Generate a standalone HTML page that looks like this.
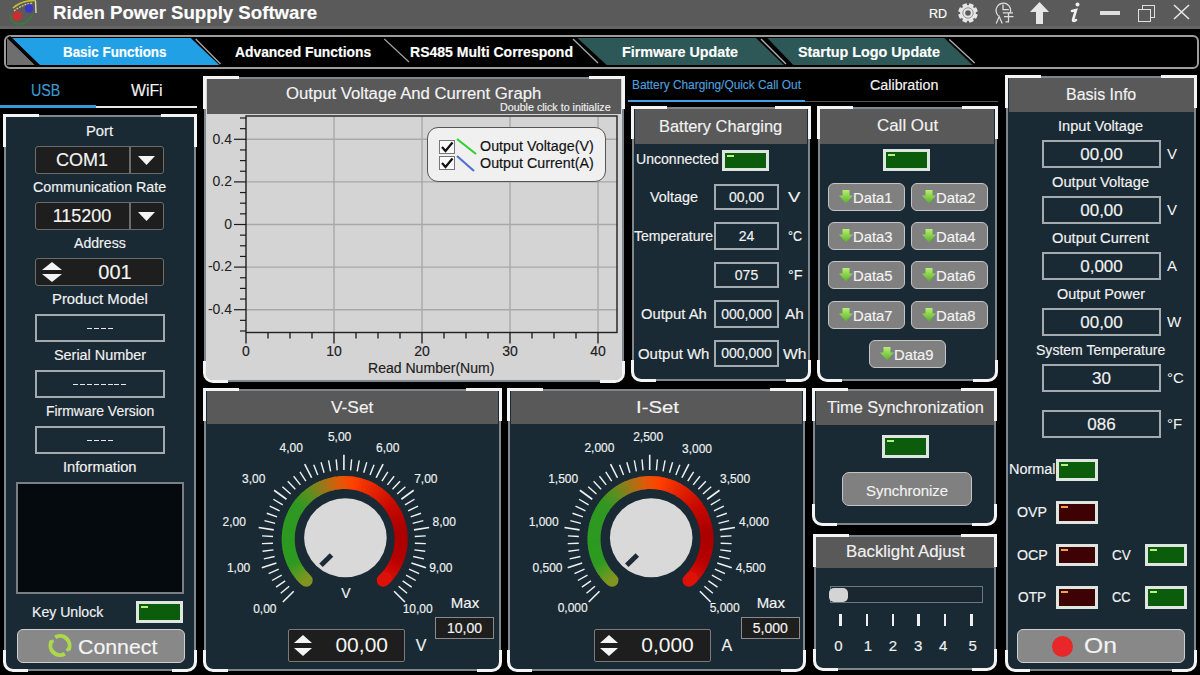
<!DOCTYPE html><html><head><meta charset="utf-8"><style>
html,body{margin:0;padding:0;}
body{width:1200px;height:675px;overflow:hidden;background:#000;position:relative;font-family:"Liberation Sans", sans-serif;}
.a{position:absolute;}
.t{position:absolute;white-space:nowrap;line-height:1;transform-origin:0 50%;-webkit-text-stroke:0.15px currentColor;}
.c{-webkit-text-stroke:0.15px currentColor;}
.c{text-align:center;white-space:nowrap;}
</style></head><body>
<div class="a" style="left:0px;top:0px;width:1200px;height:29px;background:#5a5a5a;"></div>
<div class="a" style="left:0px;top:26px;width:1200px;height:2.5px;background:#646464;"></div>
<span class="t" style="left:53.07px;top:3.19px;font-size:19px;color:#ffffff;font-weight:700;transform:scaleX(0.9809);">Riden Power Supply Software</span>
<svg class="a" style="left:6px;top:0px" width="36" height="28" viewBox="0 0 36 28">
<path d="M7 8 Q16 0 30 0.5" stroke="#c8c03a" stroke-width="1.6" fill="none"/>
<path d="M8 11 Q17 4 27 3" stroke="#d8d070" stroke-width="1.2" fill="none" stroke-dasharray="2 1"/>
<path d="M29.5 1 L30 13" stroke="#d8d8b0" stroke-width="1.4"/>
<circle cx="23" cy="8.5" r="4.2" fill="#3838c8"/>
<circle cx="11" cy="16" r="4.8" fill="#c83030"/>
<path d="M4 14 Q5 24 13 24.5 Q22 24 27 14" stroke="#3a7a40" stroke-width="1.8" fill="none"/>
<path d="M9 22 V25 M13 22 V25.5 M17 22 V25" stroke="#3a7a40" stroke-width="1.2"/>
</svg>
<span class="t" style="left:929.38px;top:7.13px;font-size:13px;color:#ffffff;font-weight:400;transform:scaleX(0.9605);">RD</span>
<svg class="a" style="left:958px;top:3px" width="20" height="20" viewBox="-10 -10 20 20"><rect x="-2.4" y="-9.8" width="4.8" height="5" rx="1" transform="rotate(22.5)" fill="#e6e6e6"/><rect x="-2.4" y="-9.8" width="4.8" height="5" rx="1" transform="rotate(67.5)" fill="#e6e6e6"/><rect x="-2.4" y="-9.8" width="4.8" height="5" rx="1" transform="rotate(112.5)" fill="#e6e6e6"/><rect x="-2.4" y="-9.8" width="4.8" height="5" rx="1" transform="rotate(157.5)" fill="#e6e6e6"/><rect x="-2.4" y="-9.8" width="4.8" height="5" rx="1" transform="rotate(202.5)" fill="#e6e6e6"/><rect x="-2.4" y="-9.8" width="4.8" height="5" rx="1" transform="rotate(247.5)" fill="#e6e6e6"/><rect x="-2.4" y="-9.8" width="4.8" height="5" rx="1" transform="rotate(292.5)" fill="#e6e6e6"/><rect x="-2.4" y="-9.8" width="4.8" height="5" rx="1" transform="rotate(337.5)" fill="#e6e6e6"/>
<circle r="7.8" fill="#e6e6e6"/><circle r="5.2" fill="none" stroke="#8a8a8a" stroke-width="0.9"/><circle r="2.8" fill="#5a5a5a"/></svg>
<svg class="a" style="left:994px;top:0px" width="22" height="26" viewBox="0 0 22 26" fill="none" stroke="#dedede" stroke-width="1.25">
<path d="M16 13.5 A7.3 7.3 0 1 0 4.6 16"/>
<path d="M9 4.5 V9.5 H14.8"/><path d="M8.8 12.8 H19 M10 16.5 H19.5 M14.5 12.8 V21.8 H11.5"/>
<path d="M2.2 23.5 L5.2 16.5 L8.2 23.5"/>
</svg>
<svg class="a" style="left:1030px;top:2px" width="19" height="22" viewBox="0 0 19 22"><path d="M9.5 0 L19 10 H13 V22 H6 V10 H0 Z" fill="#e6e6e6"/></svg>
<svg class="a" style="left:1068px;top:2px" width="13" height="22" viewBox="0 0 13 22"><circle cx="9.5" cy="2.5" r="2" fill="#f0f0f0"/>
<path d="M4 9 L8 8 L5 18 Q5 20 8 18" stroke="#f0f0f0" stroke-width="2.6" fill="none" stroke-linecap="round"/></svg>
<div class="a" style="left:1100px;top:11px;width:20px;height:4px;background:#e0e0e0;"></div>
<div class="a" style="left:1142px;top:5px;width:13px;height:13px;border:1.5px solid #e0e0e0;box-sizing:border-box;"></div>
<div class="a" style="left:1138px;top:9px;width:13px;height:13px;border:1.5px solid #e0e0e0;box-sizing:border-box;background:#5a5a5a;"></div>
<svg class="a" style="left:1173px;top:4px" width="17" height="16" viewBox="0 0 17 16"><path d="M1 1 L16 15 M16 1 L1 15" stroke="#e6e6e6" stroke-width="1.6"/></svg>
<div class="a" style="left:4px;top:34.7px;width:1194.5px;height:34px;border:2.5px solid #9c9e9e;border-radius:6px;box-sizing:border-box;background:#000;"></div>
<svg class="a" style="left:0;top:0" width="1200" height="70">
<path d="M7 38 L35 65 L7 65 Z" fill="#6e6e6e"/>
<path d="M12 38 L190.7 38 L219.3 65 L40 65 Z" fill="#22a0e6"/>
<path d="M9 37 L37 65" stroke="#000" stroke-width="3"/>
<path d="M195.7 39 L220.5 64" stroke="#a8a8a8" stroke-width="1.3"/>
<path d="M384.3 39 L409 62" stroke="#a0a0a0" stroke-width="1.2"/>
<path d="M573 39 L598 63" stroke="#a8a8a8" stroke-width="1.3"/>
<path d="M577.3 38 L756 38 L784 65 L606.7 65 Z" fill="#2e5757"/>
<path d="M761 39 L786 64" stroke="#b0b0b0" stroke-width="1.3"/>
<path d="M767.3 38 L944.3 38 L972.7 65 L793.3 65 Z" fill="#2e5757"/>
<path d="M949.3 39.5 L974.7 63" stroke="#b0b0b0" stroke-width="1.3"/>
</svg>
<span class="t" style="left:63.33px;top:45.14px;font-size:14px;color:#ffffff;font-weight:700;transform:scaleX(0.9568);">Basic Functions</span>
<span class="t" style="left:235.31px;top:45.14px;font-size:14px;color:#ffffff;font-weight:700;transform:scaleX(0.9883);">Advanced Functions</span>
<span class="t" style="left:410.30px;top:45.14px;font-size:14px;color:#ffffff;font-weight:700;transform:scaleX(1.0025);">RS485 Multi Correspond</span>
<span class="t" style="left:622.29px;top:45.14px;font-size:14px;color:#ffffff;font-weight:700;transform:scaleX(1.0213);">Firmware Update</span>
<span class="t" style="left:798.28px;top:45.14px;font-size:14px;color:#ffffff;font-weight:700;transform:scaleX(1.0249);">Startup Logo Update</span>
<span class="t" style="left:31.29px;top:82.66px;font-size:16px;color:#3d9ad4;font-weight:400;transform:scaleX(0.8917);">USB</span>
<span class="t" style="left:131.21px;top:82.66px;font-size:16px;color:#f4f4f4;font-weight:400;transform:scaleX(0.9868);">WiFi</span>
<div class="a" style="left:0px;top:104.5px;width:96px;height:3px;background:#3a9ad8;"></div>
<div class="a" style="left:96px;top:105.6px;width:101px;height:2px;background:#e8e8e8;"></div>
<div class="a" style="left:4px;top:115px;width:192px;height:556px;background:#1a2a34;border:2.6px solid #80878c;box-sizing:border-box;border-radius:0 0 9px 9px;"></div>
<div class="a" style="left:3px;top:114px;width:36px;height:33px;border-top:3.6px solid #f4f4f4;border-left:3.6px solid #f4f4f4;box-sizing:border-box;"></div>
<div class="a" style="left:161px;top:114px;width:36px;height:33px;border-top:3.6px solid #f4f4f4;border-right:3.6px solid #f4f4f4;box-sizing:border-box;"></div>
<div class="a" style="left:3px;top:650px;width:25px;height:22px;border-bottom:3.6px solid #f4f4f4;border-left:3.6px solid #f4f4f4;box-sizing:border-box;border-bottom-left-radius:10px;"></div>
<div class="a" style="left:172px;top:650px;width:25px;height:22px;border-bottom:3.6px solid #f4f4f4;border-right:3.6px solid #f4f4f4;box-sizing:border-box;border-bottom-right-radius:10px;"></div>
<span class="t" style="left:86.26px;top:124.14px;font-size:14px;color:#f2f2f2;font-weight:400;transform:scaleX(1.0569);">Port</span>
<div class="a" style="left:35px;top:146px;width:129px;height:28px;background:#1e1e1e;border:1.5px solid #6c6c6c;border-radius:3px;box-sizing:border-box;"></div>
<div class="a" style="left:129px;top:147px;width:1.5px;height:26px;background:#6c6c6c;"></div>
<div class="a c" style="left:35px;top:146px;width:94px;height:28px;line-height:28px;font-size:18px;color:#f4f4f4">COM1</div>
<svg class="a" style="left:138px;top:156px" width="17" height="9"><path d="M0 0 H17 L8.5 9 Z" fill="#f4f4f4"/></svg>
<span class="t" style="left:33.29px;top:180.14px;font-size:14px;color:#f2f2f2;font-weight:400;transform:scaleX(1.0185);">Communication Rate</span>
<div class="a" style="left:35px;top:202px;width:129px;height:28px;background:#1e1e1e;border:1.5px solid #6c6c6c;border-radius:3px;box-sizing:border-box;"></div>
<div class="a" style="left:129px;top:203px;width:1.5px;height:26px;background:#6c6c6c;"></div>
<div class="a c" style="left:35px;top:202px;width:94px;height:28px;line-height:28px;font-size:18px;color:#f4f4f4">115200</div>
<svg class="a" style="left:138px;top:212px" width="17" height="9"><path d="M0 0 H17 L8.5 9 Z" fill="#f4f4f4"/></svg>
<span class="t" style="left:74.29px;top:236.14px;font-size:14px;color:#f2f2f2;font-weight:400;transform:scaleX(1.0081);">Address</span>
<div class="a" style="left:35px;top:258px;width:129px;height:28px;background:#1e1e1e;border:1.5px solid #6c6c6c;border-radius:3px;box-sizing:border-box;"></div>
<svg class="a" style="left:42px;top:262px" width="20" height="20"><path d="M10 0 L20 8 H0 Z M0 12 H20 L10 20 Z" fill="#f4f4f4"/></svg>
<div class="a c" style="left:75px;top:258px;width:80px;height:28px;line-height:28px;font-size:20px;color:#f4f4f4">001</div>
<span class="t" style="left:52.26px;top:292.14px;font-size:14px;color:#f2f2f2;font-weight:400;transform:scaleX(1.0609);">Product Model</span>
<div class="a" style="left:35px;top:314px;width:130px;height:28px;border:2px solid #a3abb0;box-sizing:border-box;background:#1a2a34;"></div>
<div class="a c" style="left:35px;top:314px;width:130px;height:28px;font-size:15px;line-height:28px;color:#f2f2f2"></div>
<div class="a" style="left:87.15px;top:327.5px;width:25.7px;height:1.6px;background:repeating-linear-gradient(90deg,#e8e8e8 0 5px,transparent 5px 6.9px);"></div>
<span class="t" style="left:54.28px;top:348.14px;font-size:14px;color:#f2f2f2;font-weight:400;transform:scaleX(1.0274);">Serial Number</span>
<div class="a" style="left:35px;top:370px;width:130px;height:28px;border:2px solid #a3abb0;box-sizing:border-box;background:#1a2a34;"></div>
<div class="a c" style="left:35px;top:370px;width:130px;height:28px;font-size:15px;line-height:28px;color:#f2f2f2"></div>
<div class="a" style="left:73.35px;top:383.5px;width:53.3px;height:1.6px;background:repeating-linear-gradient(90deg,#e8e8e8 0 5px,transparent 5px 6.9px);"></div>
<span class="t" style="left:46.30px;top:404.14px;font-size:14px;color:#f2f2f2;font-weight:400;transform:scaleX(0.9944);">Firmware Version</span>
<div class="a" style="left:35px;top:426px;width:130px;height:28px;border:2px solid #a3abb0;box-sizing:border-box;background:#1a2a34;"></div>
<div class="a c" style="left:35px;top:426px;width:130px;height:28px;font-size:15px;line-height:28px;color:#f2f2f2"></div>
<div class="a" style="left:87.15px;top:439.5px;width:25.7px;height:1.6px;background:repeating-linear-gradient(90deg,#e8e8e8 0 5px,transparent 5px 6.9px);"></div>
<span class="t" style="left:63.27px;top:460.14px;font-size:14px;color:#f2f2f2;font-weight:400;transform:scaleX(1.0496);">Information</span>
<div class="a" style="left:16px;top:482px;width:168px;height:112px;background:#050a0e;border:2px solid #7a7f83;box-sizing:border-box;"></div>
<span class="t" style="left:32.30px;top:605.14px;font-size:14px;color:#f2f2f2;font-weight:400;transform:scaleX(1.0057);">Key Unlock</span>
<div class="a" style="left:136px;top:601px;width:47px;height:22px;border:3px solid #dfe6df;box-sizing:border-box;background:#0b5c0b;"></div>
<div class="a" style="left:141px;top:606px;width:7px;height:2px;background:#b8f080;"></div>
<div class="a" style="left:17px;top:629px;width:168px;height:34px;background:#888888;border:1.5px solid #cfcfcf;border-radius:6px;box-sizing:border-box;"></div>
<svg class="a" style="left:46px;top:632px" width="28" height="28" viewBox="0 0 28 28" fill="none" stroke="#acd84c" stroke-width="4">
<path d="M9.2 5.19 A9.6 9.6 0 0 1 22.31 18.3"/><path d="M18.8 21.81 A9.6 9.6 0 0 1 5.69 8.7"/>
<path d="M20.5 18.5 L24 16" stroke-width="3"/><path d="M7.5 8.5 L4 11" stroke-width="3"/>
</svg>
<span class="t" style="left:77.93px;top:635.71px;font-size:21px;color:#f4f4f4;font-weight:400;transform:scaleX(1.0145);">Connect</span>
<div class="a" style="left:204px;top:76.5px;width:419.70000000000005px;height:305.0px;background:#d4d4d4;border:2.6px solid #80878c;box-sizing:border-box;border-radius:0 0 9px 9px;"></div>
<div class="a" style="left:206.6px;top:78.5px;width:414.50000000000006px;height:35.3px;background:#595959;"></div>
<div class="a" style="left:203px;top:75.5px;width:36px;height:33px;border-top:3.6px solid #f4f4f4;border-left:3.6px solid #f4f4f4;box-sizing:border-box;"></div>
<div class="a" style="left:588.7px;top:75.5px;width:36px;height:33px;border-top:3.6px solid #f4f4f4;border-right:3.6px solid #f4f4f4;box-sizing:border-box;"></div>
<div class="a" style="left:203px;top:360.5px;width:25px;height:22px;border-bottom:3.6px solid #f4f4f4;border-left:3.6px solid #f4f4f4;box-sizing:border-box;border-bottom-left-radius:10px;"></div>
<div class="a" style="left:599.7px;top:360.5px;width:25px;height:22px;border-bottom:3.6px solid #f4f4f4;border-right:3.6px solid #f4f4f4;box-sizing:border-box;border-bottom-right-radius:10px;"></div>
<span class="t" style="left:286.17px;top:86.16px;font-size:16px;color:#f4f4f4;font-weight:400;transform:scaleX(1.0435);">Output Voltage And Current Graph</span>
<span class="t" style="left:500.47px;top:102.36px;font-size:10.5px;color:#f0f0f0;font-weight:400;transform:scaleX(1.0190);">Double click to initialize</span>
<svg class="a" style="left:0;top:0" width="1200" height="400"><line x1="246" y1="309.7" x2="617" y2="309.7" stroke="#a8a8a8" stroke-width="1.4"/><line x1="246" y1="267.1" x2="617" y2="267.1" stroke="#a8a8a8" stroke-width="1.4"/><line x1="246" y1="224.5" x2="617" y2="224.5" stroke="#a8a8a8" stroke-width="1.4"/><line x1="246" y1="181.9" x2="617" y2="181.9" stroke="#a8a8a8" stroke-width="1.4"/><line x1="246" y1="139.3" x2="617" y2="139.3" stroke="#a8a8a8" stroke-width="1.4"/><line x1="334.0" y1="116" x2="334.0" y2="332.5" stroke="#a8a8a8" stroke-width="1.4"/><line x1="422.0" y1="116" x2="422.0" y2="332.5" stroke="#a8a8a8" stroke-width="1.4"/><line x1="510.0" y1="116" x2="510.0" y2="332.5" stroke="#a8a8a8" stroke-width="1.4"/><line x1="598.0" y1="116" x2="598.0" y2="332.5" stroke="#a8a8a8" stroke-width="1.4"/><rect x="246" y="116" width="371" height="216.5" fill="none" stroke="#202020" stroke-width="1.4"/><line x1="240" y1="331.0" x2="246" y2="331.0" stroke="#1a1a1a" stroke-width="1.2"/><line x1="240" y1="320.35" x2="246" y2="320.35" stroke="#1a1a1a" stroke-width="1.2"/><line x1="234" y1="309.7" x2="246" y2="309.7" stroke="#1a1a1a" stroke-width="1.2"/><line x1="240" y1="299.05" x2="246" y2="299.05" stroke="#1a1a1a" stroke-width="1.2"/><line x1="240" y1="288.4" x2="246" y2="288.4" stroke="#1a1a1a" stroke-width="1.2"/><line x1="240" y1="277.75" x2="246" y2="277.75" stroke="#1a1a1a" stroke-width="1.2"/><line x1="234" y1="267.1" x2="246" y2="267.1" stroke="#1a1a1a" stroke-width="1.2"/><line x1="240" y1="256.45" x2="246" y2="256.45" stroke="#1a1a1a" stroke-width="1.2"/><line x1="240" y1="245.8" x2="246" y2="245.8" stroke="#1a1a1a" stroke-width="1.2"/><line x1="240" y1="235.15" x2="246" y2="235.15" stroke="#1a1a1a" stroke-width="1.2"/><line x1="234" y1="224.5" x2="246" y2="224.5" stroke="#1a1a1a" stroke-width="1.2"/><line x1="240" y1="213.85" x2="246" y2="213.85" stroke="#1a1a1a" stroke-width="1.2"/><line x1="240" y1="203.2" x2="246" y2="203.2" stroke="#1a1a1a" stroke-width="1.2"/><line x1="240" y1="192.55" x2="246" y2="192.55" stroke="#1a1a1a" stroke-width="1.2"/><line x1="234" y1="181.9" x2="246" y2="181.9" stroke="#1a1a1a" stroke-width="1.2"/><line x1="240" y1="171.25" x2="246" y2="171.25" stroke="#1a1a1a" stroke-width="1.2"/><line x1="240" y1="160.6" x2="246" y2="160.6" stroke="#1a1a1a" stroke-width="1.2"/><line x1="240" y1="149.95" x2="246" y2="149.95" stroke="#1a1a1a" stroke-width="1.2"/><line x1="234" y1="139.3" x2="246" y2="139.3" stroke="#1a1a1a" stroke-width="1.2"/><line x1="240" y1="128.64999999999998" x2="246" y2="128.64999999999998" stroke="#1a1a1a" stroke-width="1.2"/><line x1="240" y1="118.0" x2="246" y2="118.0" stroke="#1a1a1a" stroke-width="1.2"/><line x1="246.0" y1="332.5" x2="246.0" y2="343.5" stroke="#1a1a1a" stroke-width="1.3"/><line x1="268.0" y1="332.5" x2="268.0" y2="338.5" stroke="#1a1a1a" stroke-width="1.3"/><line x1="290.0" y1="332.5" x2="290.0" y2="338.5" stroke="#1a1a1a" stroke-width="1.3"/><line x1="312.0" y1="332.5" x2="312.0" y2="338.5" stroke="#1a1a1a" stroke-width="1.3"/><line x1="334.0" y1="332.5" x2="334.0" y2="343.5" stroke="#1a1a1a" stroke-width="1.3"/><line x1="356.0" y1="332.5" x2="356.0" y2="338.5" stroke="#1a1a1a" stroke-width="1.3"/><line x1="378.0" y1="332.5" x2="378.0" y2="338.5" stroke="#1a1a1a" stroke-width="1.3"/><line x1="400.0" y1="332.5" x2="400.0" y2="338.5" stroke="#1a1a1a" stroke-width="1.3"/><line x1="422.0" y1="332.5" x2="422.0" y2="343.5" stroke="#1a1a1a" stroke-width="1.3"/><line x1="444.0" y1="332.5" x2="444.0" y2="338.5" stroke="#1a1a1a" stroke-width="1.3"/><line x1="466.0" y1="332.5" x2="466.0" y2="338.5" stroke="#1a1a1a" stroke-width="1.3"/><line x1="488.0" y1="332.5" x2="488.0" y2="338.5" stroke="#1a1a1a" stroke-width="1.3"/><line x1="510.0" y1="332.5" x2="510.0" y2="343.5" stroke="#1a1a1a" stroke-width="1.3"/><line x1="532.0" y1="332.5" x2="532.0" y2="338.5" stroke="#1a1a1a" stroke-width="1.3"/><line x1="554.0" y1="332.5" x2="554.0" y2="338.5" stroke="#1a1a1a" stroke-width="1.3"/><line x1="576.0" y1="332.5" x2="576.0" y2="338.5" stroke="#1a1a1a" stroke-width="1.3"/><line x1="598.0" y1="332.5" x2="598.0" y2="343.5" stroke="#1a1a1a" stroke-width="1.3"/></svg>
<div class="a" style="left:180px;width:52px;text-align:right;top:131.6px;font-size:14px;line-height:15px;color:#202020">0.4</div>
<div class="a" style="left:180px;width:52px;text-align:right;top:174.2px;font-size:14px;line-height:15px;color:#202020">0.2</div>
<div class="a" style="left:180px;width:52px;text-align:right;top:216.8px;font-size:14px;line-height:15px;color:#202020">0</div>
<div class="a" style="left:180px;width:52px;text-align:right;top:259.4px;font-size:14px;line-height:15px;color:#202020">-0.2</div>
<div class="a" style="left:180px;width:52px;text-align:right;top:302.0px;font-size:14px;line-height:15px;color:#202020">-0.4</div>
<div class="a c" style="left:226.0px;width:40px;top:343.5px;font-size:14px;line-height:15px;color:#202020">0</div>
<div class="a c" style="left:314.0px;width:40px;top:343.5px;font-size:14px;line-height:15px;color:#202020">10</div>
<div class="a c" style="left:402.0px;width:40px;top:343.5px;font-size:14px;line-height:15px;color:#202020">20</div>
<div class="a c" style="left:490.0px;width:40px;top:343.5px;font-size:14px;line-height:15px;color:#202020">30</div>
<div class="a c" style="left:578.0px;width:40px;top:343.5px;font-size:14px;line-height:15px;color:#202020">40</div>
<span class="t" style="left:368.30px;top:361.14px;font-size:14px;color:#202020;font-weight:400;transform:scaleX(1.0032);">Read Number(Num)</span>
<div class="a" style="left:427px;top:127px;width:179px;height:55px;background:#f0f0f0;border:1px solid #555;border-radius:11px;box-sizing:border-box;"></div>
<div class="a" style="left:439px;top:140px;width:16px;height:14px;background:#fafafa;border:1px solid #777;box-sizing:border-box;"></div>
<svg class="a" style="left:440px;top:141px" width="14" height="12"><path d="M2 6 L5.5 10 L12.5 1.5" stroke="#111" stroke-width="2.2" fill="none"/></svg>
<div class="a" style="left:439px;top:156px;width:16px;height:14px;background:#fafafa;border:1px solid #777;box-sizing:border-box;"></div>
<svg class="a" style="left:440px;top:157px" width="14" height="12"><path d="M2 6 L5.5 10 L12.5 1.5" stroke="#111" stroke-width="2.2" fill="none"/></svg>
<svg class="a" style="left:455px;top:137px" width="24" height="36"><line x1="2" y1="2" x2="21" y2="17" stroke="#30d030" stroke-width="2.2"/><line x1="2" y1="19" x2="19" y2="34" stroke="#5070d0" stroke-width="2.2"/></svg>
<span class="t" style="left:480.28px;top:138.64px;font-size:14px;color:#111;font-weight:400;transform:scaleX(1.0219);">Output Voltage(V)</span>
<span class="t" style="left:480.28px;top:155.64px;font-size:14px;color:#111;font-weight:400;transform:scaleX(1.0219);">Output Current(A)</span>
<span class="t" style="left:632.41px;top:78.82px;font-size:12px;color:#4f9fdc;font-weight:400;transform:scaleX(0.9894);">Battery Charging/Quick Call Out</span>
<span class="t" style="left:870.29px;top:77.84px;font-size:14px;color:#f4f4f4;font-weight:400;transform:scaleX(1.0213);">Calibration</span>
<div class="a" style="left:628px;top:100px;width:177px;height:2px;background:#44a2e6;"></div>
<div class="a" style="left:805px;top:100.5px;width:193px;height:1.5px;background:#555555;"></div>
<div class="a" style="left:632px;top:107.3px;width:178px;height:273.7px;background:#1a2a34;border:2.6px solid #80878c;box-sizing:border-box;border-radius:0 0 9px 9px;"></div>
<div class="a" style="left:634.6px;top:109.3px;width:172.8px;height:34.500000000000014px;background:#595959;"></div>
<div class="a" style="left:631px;top:106.3px;width:36px;height:33px;border-top:3.6px solid #f4f4f4;border-left:3.6px solid #f4f4f4;box-sizing:border-box;"></div>
<div class="a" style="left:775px;top:106.3px;width:36px;height:33px;border-top:3.6px solid #f4f4f4;border-right:3.6px solid #f4f4f4;box-sizing:border-box;"></div>
<div class="a" style="left:631px;top:360px;width:25px;height:22px;border-bottom:3.6px solid #f4f4f4;border-left:3.6px solid #f4f4f4;box-sizing:border-box;border-bottom-left-radius:10px;"></div>
<div class="a" style="left:786px;top:360px;width:25px;height:22px;border-bottom:3.6px solid #f4f4f4;border-right:3.6px solid #f4f4f4;box-sizing:border-box;border-bottom-right-radius:10px;"></div>
<span class="t" style="left:659.18px;top:117.97px;font-size:17px;color:#f2f2f2;font-weight:400;transform:scaleX(0.9660);">Battery Charging</span>
<span class="t" style="left:636.30px;top:152.14px;font-size:14px;color:#f2f2f2;font-weight:400;transform:scaleX(1.0049);">Unconnected</span>
<div class="a" style="left:722px;top:150px;width:47px;height:21px;border:3px solid #dfe6df;box-sizing:border-box;background:#0b5c0b;"></div>
<div class="a" style="left:727px;top:155px;width:7px;height:2px;background:#b8f080;"></div>
<span class="t" style="left:650.28px;top:190.14px;font-size:14px;color:#f2f2f2;font-weight:400;transform:scaleX(1.0307);">Voltage</span>
<div class="a" style="left:714px;top:184px;width:65px;height:26px;border:2px solid #a3abb0;box-sizing:border-box;background:#1a2a34;"></div>
<div class="a c" style="left:714px;top:184px;width:65px;height:26px;font-size:14px;line-height:26px;color:#f2f2f2">00,00</div>
<span class="t" style="left:788.08px;top:190.14px;font-size:14px;color:#f2f2f2;font-weight:400;transform:scaleX(1.3158);">V</span>
<span class="t" style="left:634.30px;top:229.14px;font-size:14px;color:#f2f2f2;font-weight:400;transform:scaleX(1.0052);">Temperature</span>
<div class="a" style="left:714px;top:222px;width:65px;height:28px;border:2px solid #a3abb0;box-sizing:border-box;background:#1a2a34;"></div>
<div class="a c" style="left:714px;top:222px;width:65px;height:28px;font-size:14px;line-height:28px;color:#f2f2f2">24</div>
<span class="t" style="left:788.38px;top:229.14px;font-size:14px;color:#f2f2f2;font-weight:400;transform:scaleX(0.8904);">°C</span>
<div class="a" style="left:714px;top:262px;width:65px;height:26px;border:2px solid #a3abb0;box-sizing:border-box;background:#1a2a34;"></div>
<div class="a c" style="left:714px;top:262px;width:65px;height:26px;font-size:14px;line-height:26px;color:#f2f2f2">075</div>
<span class="t" style="left:788.28px;top:268.14px;font-size:14px;color:#f2f2f2;font-weight:400;transform:scaleX(1.0317);">°F</span>
<span class="t" style="left:641.26px;top:307.14px;font-size:14px;color:#f2f2f2;font-weight:400;transform:scaleX(1.0561);">Output Ah</span>
<div class="a" style="left:714px;top:300px;width:65px;height:28px;border:2px solid #a3abb0;box-sizing:border-box;background:#1a2a34;"></div>
<div class="a c" style="left:714px;top:300px;width:65px;height:28px;font-size:14px;line-height:28px;color:#f2f2f2">000,000</div>
<span class="t" style="left:785.24px;top:307.14px;font-size:14px;color:#f2f2f2;font-weight:400;transform:scaleX(1.0897);">Ah</span>
<span class="t" style="left:638.25px;top:346.64px;font-size:14px;color:#f2f2f2;font-weight:400;transform:scaleX(1.0671);">Output Wh</span>
<div class="a" style="left:714px;top:340px;width:65px;height:27px;border:2px solid #a3abb0;box-sizing:border-box;background:#1a2a34;"></div>
<div class="a c" style="left:714px;top:340px;width:65px;height:27px;font-size:14px;line-height:27px;color:#f2f2f2">000,000</div>
<span class="t" style="left:783.21px;top:346.64px;font-size:14px;color:#f2f2f2;font-weight:400;transform:scaleX(1.1224);">Wh</span>
<div class="a" style="left:817.7px;top:107.3px;width:179.29999999999995px;height:273.7px;background:#1a2a34;border:2.6px solid #80878c;box-sizing:border-box;border-radius:0 0 9px 9px;"></div>
<div class="a" style="left:820.3000000000001px;top:109.3px;width:174.09999999999997px;height:34.39999999999999px;background:#595959;"></div>
<div class="a" style="left:816.7px;top:106.3px;width:36px;height:33px;border-top:3.6px solid #f4f4f4;border-left:3.6px solid #f4f4f4;box-sizing:border-box;"></div>
<div class="a" style="left:962px;top:106.3px;width:36px;height:33px;border-top:3.6px solid #f4f4f4;border-right:3.6px solid #f4f4f4;box-sizing:border-box;"></div>
<div class="a" style="left:816.7px;top:360px;width:25px;height:22px;border-bottom:3.6px solid #f4f4f4;border-left:3.6px solid #f4f4f4;box-sizing:border-box;border-bottom-left-radius:10px;"></div>
<div class="a" style="left:973px;top:360px;width:25px;height:22px;border-bottom:3.6px solid #f4f4f4;border-right:3.6px solid #f4f4f4;box-sizing:border-box;border-bottom-right-radius:10px;"></div>
<span class="t" style="left:877.15px;top:117.07px;font-size:17px;color:#f2f2f2;font-weight:400;transform:scaleX(0.9949);">Call Out</span>
<div class="a" style="left:883px;top:149px;width:47px;height:22px;border:3px solid #dfe6df;box-sizing:border-box;background:#0b5c0b;"></div>
<div class="a" style="left:888px;top:154px;width:7px;height:2px;background:#b8f080;"></div>
<div class="a" style="left:828px;top:183px;width:77px;height:28px;background:#808080;border:1.5px solid #c4c4c4;border-radius:6px;box-sizing:border-box;"></div>
<svg class="a" style="left:839px;top:189.5px" width="14" height="16" viewBox="0 0 14 16">
<defs><linearGradient id="ag" x1="0" y1="0" x2="0" y2="1"><stop offset="0" stop-color="#b8f070"/><stop offset="1" stop-color="#58b028"/></linearGradient></defs>
<path d="M3.5 0 H10.5 V5.5 H14 L7 13.5 L0 5.5 H3.5 Z" fill="url(#ag)"/></svg>
<span class="t" style="left:853.26px;top:189.65px;font-size:15px;color:#f4f4f4;font-weight:400;transform:scaleX(0.9870);">Data1</span>
<div class="a" style="left:911px;top:183px;width:77px;height:28px;background:#808080;border:1.5px solid #c4c4c4;border-radius:6px;box-sizing:border-box;"></div>
<svg class="a" style="left:922px;top:189.5px" width="14" height="16" viewBox="0 0 14 16">
<defs><linearGradient id="ag" x1="0" y1="0" x2="0" y2="1"><stop offset="0" stop-color="#b8f070"/><stop offset="1" stop-color="#58b028"/></linearGradient></defs>
<path d="M3.5 0 H10.5 V5.5 H14 L7 13.5 L0 5.5 H3.5 Z" fill="url(#ag)"/></svg>
<span class="t" style="left:936.26px;top:189.65px;font-size:15px;color:#f4f4f4;font-weight:400;transform:scaleX(0.9870);">Data2</span>
<div class="a" style="left:828px;top:222px;width:77px;height:28px;background:#808080;border:1.5px solid #c4c4c4;border-radius:6px;box-sizing:border-box;"></div>
<svg class="a" style="left:839px;top:228.5px" width="14" height="16" viewBox="0 0 14 16">
<defs><linearGradient id="ag" x1="0" y1="0" x2="0" y2="1"><stop offset="0" stop-color="#b8f070"/><stop offset="1" stop-color="#58b028"/></linearGradient></defs>
<path d="M3.5 0 H10.5 V5.5 H14 L7 13.5 L0 5.5 H3.5 Z" fill="url(#ag)"/></svg>
<span class="t" style="left:853.26px;top:228.65px;font-size:15px;color:#f4f4f4;font-weight:400;transform:scaleX(0.9870);">Data3</span>
<div class="a" style="left:911px;top:222px;width:77px;height:28px;background:#808080;border:1.5px solid #c4c4c4;border-radius:6px;box-sizing:border-box;"></div>
<svg class="a" style="left:922px;top:228.5px" width="14" height="16" viewBox="0 0 14 16">
<defs><linearGradient id="ag" x1="0" y1="0" x2="0" y2="1"><stop offset="0" stop-color="#b8f070"/><stop offset="1" stop-color="#58b028"/></linearGradient></defs>
<path d="M3.5 0 H10.5 V5.5 H14 L7 13.5 L0 5.5 H3.5 Z" fill="url(#ag)"/></svg>
<span class="t" style="left:936.26px;top:228.65px;font-size:15px;color:#f4f4f4;font-weight:400;transform:scaleX(0.9870);">Data4</span>
<div class="a" style="left:828px;top:261px;width:77px;height:28px;background:#808080;border:1.5px solid #c4c4c4;border-radius:6px;box-sizing:border-box;"></div>
<svg class="a" style="left:839px;top:267.5px" width="14" height="16" viewBox="0 0 14 16">
<defs><linearGradient id="ag" x1="0" y1="0" x2="0" y2="1"><stop offset="0" stop-color="#b8f070"/><stop offset="1" stop-color="#58b028"/></linearGradient></defs>
<path d="M3.5 0 H10.5 V5.5 H14 L7 13.5 L0 5.5 H3.5 Z" fill="url(#ag)"/></svg>
<span class="t" style="left:853.26px;top:267.65px;font-size:15px;color:#f4f4f4;font-weight:400;transform:scaleX(0.9870);">Data5</span>
<div class="a" style="left:911px;top:261px;width:77px;height:28px;background:#808080;border:1.5px solid #c4c4c4;border-radius:6px;box-sizing:border-box;"></div>
<svg class="a" style="left:922px;top:267.5px" width="14" height="16" viewBox="0 0 14 16">
<defs><linearGradient id="ag" x1="0" y1="0" x2="0" y2="1"><stop offset="0" stop-color="#b8f070"/><stop offset="1" stop-color="#58b028"/></linearGradient></defs>
<path d="M3.5 0 H10.5 V5.5 H14 L7 13.5 L0 5.5 H3.5 Z" fill="url(#ag)"/></svg>
<span class="t" style="left:936.26px;top:267.65px;font-size:15px;color:#f4f4f4;font-weight:400;transform:scaleX(0.9870);">Data6</span>
<div class="a" style="left:828px;top:301px;width:77px;height:28px;background:#808080;border:1.5px solid #c4c4c4;border-radius:6px;box-sizing:border-box;"></div>
<svg class="a" style="left:839px;top:307.5px" width="14" height="16" viewBox="0 0 14 16">
<defs><linearGradient id="ag" x1="0" y1="0" x2="0" y2="1"><stop offset="0" stop-color="#b8f070"/><stop offset="1" stop-color="#58b028"/></linearGradient></defs>
<path d="M3.5 0 H10.5 V5.5 H14 L7 13.5 L0 5.5 H3.5 Z" fill="url(#ag)"/></svg>
<span class="t" style="left:853.26px;top:307.65px;font-size:15px;color:#f4f4f4;font-weight:400;transform:scaleX(0.9870);">Data7</span>
<div class="a" style="left:911px;top:301px;width:77px;height:28px;background:#808080;border:1.5px solid #c4c4c4;border-radius:6px;box-sizing:border-box;"></div>
<svg class="a" style="left:922px;top:307.5px" width="14" height="16" viewBox="0 0 14 16">
<defs><linearGradient id="ag" x1="0" y1="0" x2="0" y2="1"><stop offset="0" stop-color="#b8f070"/><stop offset="1" stop-color="#58b028"/></linearGradient></defs>
<path d="M3.5 0 H10.5 V5.5 H14 L7 13.5 L0 5.5 H3.5 Z" fill="url(#ag)"/></svg>
<span class="t" style="left:936.26px;top:307.65px;font-size:15px;color:#f4f4f4;font-weight:400;transform:scaleX(0.9870);">Data8</span>
<div class="a" style="left:869px;top:340px;width:77px;height:28px;background:#808080;border:1.5px solid #c4c4c4;border-radius:6px;box-sizing:border-box;"></div>
<svg class="a" style="left:880px;top:346.5px" width="14" height="16" viewBox="0 0 14 16">
<defs><linearGradient id="ag" x1="0" y1="0" x2="0" y2="1"><stop offset="0" stop-color="#b8f070"/><stop offset="1" stop-color="#58b028"/></linearGradient></defs>
<path d="M3.5 0 H10.5 V5.5 H14 L7 13.5 L0 5.5 H3.5 Z" fill="url(#ag)"/></svg>
<span class="t" style="left:894.26px;top:346.65px;font-size:15px;color:#f4f4f4;font-weight:400;transform:scaleX(0.9870);">Data9</span>
<div class="a" style="left:1006.2px;top:76.3px;width:190.0px;height:595.1px;background:#1a2a34;border:2.6px solid #80878c;box-sizing:border-box;border-radius:0 0 9px 9px;"></div>
<div class="a" style="left:1008.8000000000001px;top:78.3px;width:184.8px;height:33.5px;background:#595959;"></div>
<div class="a" style="left:1005.2px;top:75.3px;width:36px;height:33px;border-top:3.6px solid #f4f4f4;border-left:3.6px solid #f4f4f4;box-sizing:border-box;"></div>
<div class="a" style="left:1161.2px;top:75.3px;width:36px;height:33px;border-top:3.6px solid #f4f4f4;border-right:3.6px solid #f4f4f4;box-sizing:border-box;"></div>
<div class="a" style="left:1005.2px;top:650.4px;width:25px;height:22px;border-bottom:3.6px solid #f4f4f4;border-left:3.6px solid #f4f4f4;box-sizing:border-box;border-bottom-left-radius:10px;"></div>
<div class="a" style="left:1172.2px;top:650.4px;width:25px;height:22px;border-bottom:3.6px solid #f4f4f4;border-right:3.6px solid #f4f4f4;box-sizing:border-box;border-bottom-right-radius:10px;"></div>
<span class="t" style="left:1066.20px;top:86.37px;font-size:17px;color:#f2f2f2;font-weight:400;transform:scaleX(0.9413);">Basis Info</span>
<span class="t" style="left:1058.27px;top:118.64px;font-size:14px;color:#f2f2f2;font-weight:400;transform:scaleX(1.0422);">Input Voltage</span>
<div class="a" style="left:1042px;top:140px;width:119px;height:28px;border:2px solid #a3abb0;box-sizing:border-box;background:#1a2a34;"></div>
<div class="a c" style="left:1042px;top:141px;width:119px;height:28px;font-size:17px;line-height:28px;color:#f2f2f2">00,00</div>
<div class="a" style="left:1167px;top:140px;height:28px;line-height:28px;font-size:15px;color:#f4f4f4">V</div>
<span class="t" style="left:1052.27px;top:174.64px;font-size:14px;color:#f2f2f2;font-weight:400;transform:scaleX(1.0480);">Output Voltage</span>
<div class="a" style="left:1042px;top:196px;width:119px;height:28px;border:2px solid #a3abb0;box-sizing:border-box;background:#1a2a34;"></div>
<div class="a c" style="left:1042px;top:197px;width:119px;height:28px;font-size:17px;line-height:28px;color:#f2f2f2">00,00</div>
<div class="a" style="left:1167px;top:196px;height:28px;line-height:28px;font-size:15px;color:#f4f4f4">V</div>
<span class="t" style="left:1052.27px;top:230.64px;font-size:14px;color:#f2f2f2;font-weight:400;transform:scaleX(1.0480);">Output Current</span>
<div class="a" style="left:1042px;top:252px;width:119px;height:28px;border:2px solid #a3abb0;box-sizing:border-box;background:#1a2a34;"></div>
<div class="a c" style="left:1042px;top:253px;width:119px;height:28px;font-size:17px;line-height:28px;color:#f2f2f2">0,000</div>
<div class="a" style="left:1167px;top:252px;height:28px;line-height:28px;font-size:15px;color:#f4f4f4">A</div>
<span class="t" style="left:1057.28px;top:286.64px;font-size:14px;color:#f2f2f2;font-weight:400;transform:scaleX(1.0284);">Output Power</span>
<div class="a" style="left:1042px;top:308px;width:119px;height:28px;border:2px solid #a3abb0;box-sizing:border-box;background:#1a2a34;"></div>
<div class="a c" style="left:1042px;top:309px;width:119px;height:28px;font-size:17px;line-height:28px;color:#f2f2f2">00,00</div>
<div class="a" style="left:1167px;top:308px;height:28px;line-height:28px;font-size:15px;color:#f4f4f4">W</div>
<span class="t" style="left:1036.30px;top:342.64px;font-size:14px;color:#f2f2f2;font-weight:400;transform:scaleX(1.0031);">System Temperature</span>
<div class="a" style="left:1042px;top:364px;width:119px;height:28px;border:2px solid #a3abb0;box-sizing:border-box;background:#1a2a34;"></div>
<div class="a c" style="left:1042px;top:365px;width:119px;height:28px;font-size:17px;line-height:28px;color:#f2f2f2">30</div>
<div class="a" style="left:1167px;top:364px;height:28px;line-height:28px;font-size:15px;color:#f4f4f4">°C</div>
<div class="a" style="left:1042px;top:410px;width:119px;height:28px;border:2px solid #a3abb0;box-sizing:border-box;background:#1a2a34;"></div>
<div class="a c" style="left:1042px;top:411px;width:119px;height:28px;font-size:17px;line-height:28px;color:#f2f2f2">086</div>
<div class="a" style="left:1167px;top:410px;height:28px;line-height:28px;font-size:15px;color:#f4f4f4">°F</div>
<span class="t" style="left:1009.28px;top:462.14px;font-size:14px;color:#f2f2f2;font-weight:400;transform:scaleX(1.0321);">Normal</span>
<div class="a" style="left:1056px;top:459px;width:42px;height:22px;border:3px solid #dfe6df;box-sizing:border-box;background:#0b5c0b;"></div>
<div class="a" style="left:1061px;top:464px;width:7px;height:2px;background:#b8f080;"></div>
<span class="t" style="left:1017.29px;top:504.64px;font-size:14px;color:#f2f2f2;font-weight:400;transform:scaleX(1.0140);">OVP</span>
<div class="a" style="left:1056px;top:501px;width:42px;height:23px;border:3px solid #dfe6df;box-sizing:border-box;background:#3e0205;"></div>
<div class="a" style="left:1061px;top:506px;width:7px;height:2px;background:#f0a050;"></div>
<span class="t" style="left:1017.29px;top:548.14px;font-size:14px;color:#f2f2f2;font-weight:400;transform:scaleX(1.0140);">OCP</span>
<div class="a" style="left:1056px;top:544px;width:42px;height:22px;border:3px solid #dfe6df;box-sizing:border-box;background:#3e0205;"></div>
<div class="a" style="left:1061px;top:549px;width:7px;height:2px;background:#f0a050;"></div>
<span class="t" style="left:1112.32px;top:548.14px;font-size:14px;color:#f2f2f2;font-weight:400;transform:scaleX(0.9659);">CV</span>
<div class="a" style="left:1145px;top:544px;width:42px;height:22px;border:3px solid #dfe6df;box-sizing:border-box;background:#0b5c0b;"></div>
<div class="a" style="left:1150px;top:549px;width:7px;height:2px;background:#b8f080;"></div>
<span class="t" style="left:1018.32px;top:590.14px;font-size:14px;color:#f2f2f2;font-weight:400;transform:scaleX(0.9783);">OTP</span>
<div class="a" style="left:1056px;top:586px;width:42px;height:23px;border:3px solid #dfe6df;box-sizing:border-box;background:#3e0205;"></div>
<div class="a" style="left:1061px;top:591px;width:7px;height:2px;background:#f0a050;"></div>
<span class="t" style="left:1112.36px;top:590.14px;font-size:14px;color:#f2f2f2;font-weight:400;transform:scaleX(0.9140);">CC</span>
<div class="a" style="left:1145px;top:586px;width:42px;height:23px;border:3px solid #dfe6df;box-sizing:border-box;background:#0b5c0b;"></div>
<div class="a" style="left:1150px;top:591px;width:7px;height:2px;background:#b8f080;"></div>
<div class="a" style="left:1017px;top:629px;width:168px;height:34px;background:#888888;border:1.5px solid #cfcfcf;border-radius:6px;box-sizing:border-box;"></div>
<div class="a" style="left:1052px;top:635.5px;width:21px;height:21px;border-radius:50%;background:#e82828;"></div>
<span class="t" style="left:1083.77px;top:635.22px;font-size:22px;color:#f4f4f4;font-weight:400;transform:scaleX(1.1194);">On</span>
<div class="a" style="left:204.3px;top:389.3px;width:296.5px;height:282.09999999999997px;background:#1a2a34;border:2.6px solid #80878c;box-sizing:border-box;border-radius:0 0 9px 9px;"></div>
<div class="a" style="left:206.9px;top:391.3px;width:291.3px;height:33.0px;background:#595959;"></div>
<div class="a" style="left:203.3px;top:388.3px;width:36px;height:33px;border-top:3.6px solid #f4f4f4;border-left:3.6px solid #f4f4f4;box-sizing:border-box;"></div>
<div class="a" style="left:465.8px;top:388.3px;width:36px;height:33px;border-top:3.6px solid #f4f4f4;border-right:3.6px solid #f4f4f4;box-sizing:border-box;"></div>
<div class="a" style="left:203.3px;top:650.4px;width:25px;height:22px;border-bottom:3.6px solid #f4f4f4;border-left:3.6px solid #f4f4f4;box-sizing:border-box;border-bottom-left-radius:10px;"></div>
<div class="a" style="left:476.8px;top:650.4px;width:25px;height:22px;border-bottom:3.6px solid #f4f4f4;border-right:3.6px solid #f4f4f4;box-sizing:border-box;border-bottom-right-radius:10px;"></div>
<svg class="a" style="left:0;top:0" width="1200" height="675"><line x1="293.70" y1="591.20" x2="282.88" y2="602.02" stroke="#eef2f2" stroke-width="1.6"/><line x1="289.19" y1="586.26" x2="280.72" y2="593.27" stroke="#eef2f2" stroke-width="1.4"/><line x1="285.18" y1="580.91" x2="276.08" y2="587.09" stroke="#eef2f2" stroke-width="1.4"/><line x1="281.68" y1="575.20" x2="272.04" y2="580.50" stroke="#eef2f2" stroke-width="1.4"/><line x1="278.74" y1="569.20" x2="268.64" y2="573.57" stroke="#eef2f2" stroke-width="1.4"/><line x1="276.37" y1="562.94" x2="261.82" y2="567.67" stroke="#eef2f2" stroke-width="1.6"/><line x1="274.61" y1="556.49" x2="263.87" y2="558.89" stroke="#eef2f2" stroke-width="1.4"/><line x1="273.46" y1="549.90" x2="262.55" y2="551.28" stroke="#eef2f2" stroke-width="1.4"/><line x1="272.94" y1="543.23" x2="261.94" y2="543.58" stroke="#eef2f2" stroke-width="1.4"/><line x1="273.04" y1="536.54" x2="262.06" y2="535.85" stroke="#eef2f2" stroke-width="1.4"/><line x1="273.77" y1="529.89" x2="258.66" y2="527.50" stroke="#eef2f2" stroke-width="1.6"/><line x1="275.13" y1="523.34" x2="264.48" y2="520.61" stroke="#eef2f2" stroke-width="1.4"/><line x1="277.10" y1="516.95" x2="266.75" y2="513.22" stroke="#eef2f2" stroke-width="1.4"/><line x1="279.66" y1="510.77" x2="269.70" y2="506.09" stroke="#eef2f2" stroke-width="1.4"/><line x1="282.79" y1="504.86" x2="273.32" y2="499.26" stroke="#eef2f2" stroke-width="1.4"/><line x1="286.46" y1="499.27" x2="274.08" y2="490.27" stroke="#eef2f2" stroke-width="1.6"/><line x1="290.64" y1="494.05" x2="282.39" y2="486.77" stroke="#eef2f2" stroke-width="1.4"/><line x1="295.30" y1="489.24" x2="287.77" y2="481.22" stroke="#eef2f2" stroke-width="1.4"/><line x1="300.38" y1="484.90" x2="293.64" y2="476.21" stroke="#eef2f2" stroke-width="1.4"/><line x1="305.86" y1="481.05" x2="299.96" y2="471.77" stroke="#eef2f2" stroke-width="1.4"/><line x1="311.67" y1="477.74" x2="304.72" y2="464.11" stroke="#eef2f2" stroke-width="1.6"/><line x1="317.76" y1="474.99" x2="313.71" y2="464.76" stroke="#eef2f2" stroke-width="1.4"/><line x1="324.09" y1="472.82" x2="321.02" y2="462.26" stroke="#eef2f2" stroke-width="1.4"/><line x1="330.60" y1="471.26" x2="328.53" y2="460.45" stroke="#eef2f2" stroke-width="1.4"/><line x1="337.22" y1="470.32" x2="336.18" y2="459.36" stroke="#eef2f2" stroke-width="1.4"/><line x1="343.90" y1="470.00" x2="343.90" y2="454.70" stroke="#eef2f2" stroke-width="1.6"/><line x1="350.58" y1="470.32" x2="351.62" y2="459.36" stroke="#eef2f2" stroke-width="1.4"/><line x1="357.20" y1="471.26" x2="359.27" y2="460.45" stroke="#eef2f2" stroke-width="1.4"/><line x1="363.71" y1="472.82" x2="366.78" y2="462.26" stroke="#eef2f2" stroke-width="1.4"/><line x1="370.04" y1="474.99" x2="374.09" y2="464.76" stroke="#eef2f2" stroke-width="1.4"/><line x1="376.13" y1="477.74" x2="383.08" y2="464.11" stroke="#eef2f2" stroke-width="1.6"/><line x1="381.94" y1="481.05" x2="387.84" y2="471.77" stroke="#eef2f2" stroke-width="1.4"/><line x1="387.42" y1="484.90" x2="394.16" y2="476.21" stroke="#eef2f2" stroke-width="1.4"/><line x1="392.50" y1="489.24" x2="400.03" y2="481.22" stroke="#eef2f2" stroke-width="1.4"/><line x1="397.16" y1="494.05" x2="405.41" y2="486.77" stroke="#eef2f2" stroke-width="1.4"/><line x1="401.34" y1="499.27" x2="413.72" y2="490.27" stroke="#eef2f2" stroke-width="1.6"/><line x1="405.01" y1="504.86" x2="414.48" y2="499.26" stroke="#eef2f2" stroke-width="1.4"/><line x1="408.14" y1="510.77" x2="418.10" y2="506.09" stroke="#eef2f2" stroke-width="1.4"/><line x1="410.70" y1="516.95" x2="421.05" y2="513.22" stroke="#eef2f2" stroke-width="1.4"/><line x1="412.67" y1="523.34" x2="423.32" y2="520.61" stroke="#eef2f2" stroke-width="1.4"/><line x1="414.03" y1="529.89" x2="429.14" y2="527.50" stroke="#eef2f2" stroke-width="1.6"/><line x1="414.76" y1="536.54" x2="425.74" y2="535.85" stroke="#eef2f2" stroke-width="1.4"/><line x1="414.86" y1="543.23" x2="425.86" y2="543.58" stroke="#eef2f2" stroke-width="1.4"/><line x1="414.34" y1="549.90" x2="425.25" y2="551.28" stroke="#eef2f2" stroke-width="1.4"/><line x1="413.19" y1="556.49" x2="423.93" y2="558.89" stroke="#eef2f2" stroke-width="1.4"/><line x1="411.43" y1="562.94" x2="425.98" y2="567.67" stroke="#eef2f2" stroke-width="1.6"/><line x1="409.06" y1="569.20" x2="419.16" y2="573.57" stroke="#eef2f2" stroke-width="1.4"/><line x1="406.12" y1="575.20" x2="415.76" y2="580.50" stroke="#eef2f2" stroke-width="1.4"/><line x1="402.62" y1="580.91" x2="411.72" y2="587.09" stroke="#eef2f2" stroke-width="1.4"/><line x1="398.61" y1="586.26" x2="407.08" y2="593.27" stroke="#eef2f2" stroke-width="1.4"/><line x1="394.10" y1="591.20" x2="404.92" y2="602.02" stroke="#eef2f2" stroke-width="1.6"/><path d="M306.17 580.32 A56.5 56.5 0 0 1 303.28 577.43" stroke="#7f9520" stroke-width="13" fill="none" stroke-linecap="round"/><path d="M304.03 578.22 A56.5 56.5 0 0 1 301.30 575.18" stroke="#729721" stroke-width="13" fill="none"/><path d="M302.00 576.00 A56.5 56.5 0 0 1 299.44 572.82" stroke="#659922" stroke-width="13" fill="none"/><path d="M300.10 573.68 A56.5 56.5 0 0 1 297.71 570.37" stroke="#589a22" stroke-width="13" fill="none"/><path d="M298.32 571.26 A56.5 56.5 0 0 1 296.11 567.83" stroke="#4d9a21" stroke-width="13" fill="none"/><path d="M296.67 568.75 A56.5 56.5 0 0 1 294.65 565.21" stroke="#419a21" stroke-width="13" fill="none"/><path d="M295.16 566.16 A56.5 56.5 0 0 1 293.33 562.51" stroke="#369a20" stroke-width="13" fill="none"/><path d="M293.78 563.49 A56.5 56.5 0 0 1 292.15 559.75" stroke="#2e9a20" stroke-width="13" fill="none"/><path d="M292.56 560.75 A56.5 56.5 0 0 1 291.12 556.93" stroke="#2e9a20" stroke-width="13" fill="none"/><path d="M291.47 557.95 A56.5 56.5 0 0 1 290.24 554.06" stroke="#2d9a20" stroke-width="13" fill="none"/><path d="M290.54 555.10 A56.5 56.5 0 0 1 289.52 551.15" stroke="#2d9a20" stroke-width="13" fill="none"/><path d="M289.76 552.20 A56.5 56.5 0 0 1 288.95 548.20" stroke="#2d9a20" stroke-width="13" fill="none"/><path d="M289.14 549.26 A56.5 56.5 0 0 1 288.54 545.23" stroke="#2c9a20" stroke-width="13" fill="none"/><path d="M288.67 546.30 A56.5 56.5 0 0 1 288.29 542.23" stroke="#2c9a20" stroke-width="13" fill="none"/><path d="M288.36 543.31 A56.5 56.5 0 0 1 288.20 539.23" stroke="#2c9a20" stroke-width="13" fill="none"/><path d="M288.22 540.31 A56.5 56.5 0 0 1 288.27 536.23" stroke="#2c9a20" stroke-width="13" fill="none"/><path d="M288.23 537.31 A56.5 56.5 0 0 1 288.49 533.24" stroke="#2d9a20" stroke-width="13" fill="none"/><path d="M288.39 534.32 A56.5 56.5 0 0 1 288.88 530.26" stroke="#2d9921" stroke-width="13" fill="none"/><path d="M288.72 531.33 A56.5 56.5 0 0 1 289.42 527.31" stroke="#2d9921" stroke-width="13" fill="none"/><path d="M289.21 528.37 A56.5 56.5 0 0 1 290.12 524.39" stroke="#2d9921" stroke-width="13" fill="none"/><path d="M289.85 525.44 A56.5 56.5 0 0 1 290.97 521.51" stroke="#2e9921" stroke-width="13" fill="none"/><path d="M290.65 522.54 A56.5 56.5 0 0 1 291.98 518.68" stroke="#2e9921" stroke-width="13" fill="none"/><path d="M291.60 519.70 A56.5 56.5 0 0 1 293.13 515.91" stroke="#2e9921" stroke-width="13" fill="none"/><path d="M292.70 516.90 A56.5 56.5 0 0 1 294.43 513.21" stroke="#2e9921" stroke-width="13" fill="none"/><path d="M293.95 514.17 A56.5 56.5 0 0 1 295.87 510.57" stroke="#2e9822" stroke-width="13" fill="none"/><path d="M295.34 511.51 A56.5 56.5 0 0 1 297.45 508.02" stroke="#2f9822" stroke-width="13" fill="none"/><path d="M296.87 508.93 A56.5 56.5 0 0 1 299.16 505.55" stroke="#2f9822" stroke-width="13" fill="none"/><path d="M298.53 506.43 A56.5 56.5 0 0 1 301.00 503.18" stroke="#339722" stroke-width="13" fill="none"/><path d="M300.33 504.03 A56.5 56.5 0 0 1 302.97 500.91" stroke="#3b9621" stroke-width="13" fill="none"/><path d="M302.25 501.72 A56.5 56.5 0 0 1 305.05 498.75" stroke="#439421" stroke-width="13" fill="none"/><path d="M304.29 499.52 A56.5 56.5 0 0 1 307.24 496.70" stroke="#4b9321" stroke-width="13" fill="none"/><path d="M306.44 497.43 A56.5 56.5 0 0 1 309.54 494.77" stroke="#539120" stroke-width="13" fill="none"/><path d="M308.70 495.45 A56.5 56.5 0 0 1 311.94 492.97" stroke="#5b9020" stroke-width="13" fill="none"/><path d="M311.07 493.60 A56.5 56.5 0 0 1 314.43 491.29" stroke="#678b1e" stroke-width="13" fill="none"/><path d="M313.52 491.88 A56.5 56.5 0 0 1 317.01 489.75" stroke="#73871d" stroke-width="13" fill="none"/><path d="M316.07 490.29 A56.5 56.5 0 0 1 319.66 488.35" stroke="#7f821b" stroke-width="13" fill="none"/><path d="M318.70 488.84 A56.5 56.5 0 0 1 322.39 487.09" stroke="#8b7e1a" stroke-width="13" fill="none"/><path d="M321.40 487.53 A56.5 56.5 0 0 1 325.18 485.98" stroke="#967918" stroke-width="13" fill="none"/><path d="M324.17 486.36 A56.5 56.5 0 0 1 328.02 485.02" stroke="#a37416" stroke-width="13" fill="none"/><path d="M326.99 485.35 A56.5 56.5 0 0 1 330.91 484.21" stroke="#b06f13" stroke-width="13" fill="none"/><path d="M329.87 484.48 A56.5 56.5 0 0 1 333.84 483.55" stroke="#bd6910" stroke-width="13" fill="none"/><path d="M332.78 483.77 A56.5 56.5 0 0 1 336.80 483.05" stroke="#ca630d" stroke-width="13" fill="none"/><path d="M335.73 483.22 A56.5 56.5 0 0 1 339.78 482.71" stroke="#d75e0a" stroke-width="13" fill="none"/><path d="M338.71 482.82 A56.5 56.5 0 0 1 342.78 482.53" stroke="#e25807" stroke-width="13" fill="none"/><path d="M341.70 482.58 A56.5 56.5 0 0 1 345.78 482.51" stroke="#e95306" stroke-width="13" fill="none"/><path d="M344.70 482.50 A56.5 56.5 0 0 1 348.78 482.65" stroke="#f04e04" stroke-width="13" fill="none"/><path d="M347.70 482.58 A56.5 56.5 0 0 1 351.77 482.94" stroke="#f74802" stroke-width="13" fill="none"/><path d="M350.69 482.82 A56.5 56.5 0 0 1 354.73 483.40" stroke="#fe4300" stroke-width="13" fill="none"/><path d="M353.67 483.22 A56.5 56.5 0 0 1 357.67 484.01" stroke="#fc3f00" stroke-width="13" fill="none"/><path d="M356.62 483.77 A56.5 56.5 0 0 1 360.57 484.78" stroke="#f83b00" stroke-width="13" fill="none"/><path d="M359.53 484.48 A56.5 56.5 0 0 1 363.43 485.70" stroke="#f53600" stroke-width="13" fill="none"/><path d="M362.41 485.35 A56.5 56.5 0 0 1 366.24 486.77" stroke="#f13200" stroke-width="13" fill="none"/><path d="M365.23 486.36 A56.5 56.5 0 0 1 368.98 487.98" stroke="#ed2e00" stroke-width="13" fill="none"/><path d="M368.00 487.53 A56.5 56.5 0 0 1 371.66 489.34" stroke="#ea2a00" stroke-width="13" fill="none"/><path d="M370.70 488.84 A56.5 56.5 0 0 1 374.26 490.85" stroke="#e62600" stroke-width="13" fill="none"/><path d="M373.33 490.29 A56.5 56.5 0 0 1 376.77 492.48" stroke="#e32300" stroke-width="13" fill="none"/><path d="M375.88 491.88 A56.5 56.5 0 0 1 379.20 494.25" stroke="#df2000" stroke-width="13" fill="none"/><path d="M378.33 493.60 A56.5 56.5 0 0 1 381.52 496.15" stroke="#dc1c00" stroke-width="13" fill="none"/><path d="M380.70 495.45 A56.5 56.5 0 0 1 383.75 498.16" stroke="#d81900" stroke-width="13" fill="none"/><path d="M382.96 497.43 A56.5 56.5 0 0 1 385.86 500.30" stroke="#d41600" stroke-width="13" fill="none"/><path d="M385.11 499.52 A56.5 56.5 0 0 1 387.86 502.54" stroke="#d11200" stroke-width="13" fill="none"/><path d="M387.15 501.72 A56.5 56.5 0 0 1 389.73 504.88" stroke="#cd0f00" stroke-width="13" fill="none"/><path d="M389.07 504.03 A56.5 56.5 0 0 1 391.48 507.32" stroke="#ca0c00" stroke-width="13" fill="none"/><path d="M390.87 506.43 A56.5 56.5 0 0 1 393.10 509.85" stroke="#c60900" stroke-width="13" fill="none"/><path d="M392.53 508.93 A56.5 56.5 0 0 1 394.58 512.46" stroke="#c30800" stroke-width="13" fill="none"/><path d="M394.06 511.51 A56.5 56.5 0 0 1 395.92 515.15" stroke="#c00700" stroke-width="13" fill="none"/><path d="M395.45 514.17 A56.5 56.5 0 0 1 397.11 517.90" stroke="#bc0600" stroke-width="13" fill="none"/><path d="M396.70 516.90 A56.5 56.5 0 0 1 398.16 520.72" stroke="#b90500" stroke-width="13" fill="none"/><path d="M397.80 519.70 A56.5 56.5 0 0 1 399.06 523.58" stroke="#b60400" stroke-width="13" fill="none"/><path d="M398.75 522.54 A56.5 56.5 0 0 1 399.80 526.49" stroke="#b20300" stroke-width="13" fill="none"/><path d="M399.55 525.44 A56.5 56.5 0 0 1 400.38 529.43" stroke="#af0200" stroke-width="13" fill="none"/><path d="M400.19 528.37 A56.5 56.5 0 0 1 400.81 532.40" stroke="#ac0100" stroke-width="13" fill="none"/><path d="M400.68 531.33 A56.5 56.5 0 0 1 401.08 535.39" stroke="#ab0000" stroke-width="13" fill="none"/><path d="M401.01 534.32 A56.5 56.5 0 0 1 401.20 538.39" stroke="#ac0000" stroke-width="13" fill="none"/><path d="M401.17 537.31 A56.5 56.5 0 0 1 401.15 541.39" stroke="#ad0000" stroke-width="13" fill="none"/><path d="M401.18 540.31 A56.5 56.5 0 0 1 400.94 544.39" stroke="#ae0000" stroke-width="13" fill="none"/><path d="M401.04 543.31 A56.5 56.5 0 0 1 400.58 547.37" stroke="#af0000" stroke-width="13" fill="none"/><path d="M400.73 546.30 A56.5 56.5 0 0 1 400.05 550.32" stroke="#b00000" stroke-width="13" fill="none"/><path d="M400.26 549.26 A56.5 56.5 0 0 1 399.37 553.25" stroke="#b10000" stroke-width="13" fill="none"/><path d="M399.64 552.20 A56.5 56.5 0 0 1 398.54 556.13" stroke="#b20000" stroke-width="13" fill="none"/><path d="M398.86 555.10 A56.5 56.5 0 0 1 397.55 558.97" stroke="#b30000" stroke-width="13" fill="none"/><path d="M397.93 557.95 A56.5 56.5 0 0 1 396.42 561.75" stroke="#b60100" stroke-width="13" fill="none"/><path d="M396.84 560.75 A56.5 56.5 0 0 1 395.14 564.46" stroke="#bb0301" stroke-width="13" fill="none"/><path d="M395.62 563.49 A56.5 56.5 0 0 1 393.71 567.10" stroke="#c00502" stroke-width="13" fill="none"/><path d="M394.24 566.16 A56.5 56.5 0 0 1 392.15 569.67" stroke="#c50703" stroke-width="13" fill="none"/><path d="M392.73 568.75 A56.5 56.5 0 0 1 390.46 572.14" stroke="#ca0904" stroke-width="13" fill="none"/><path d="M391.08 571.26 A56.5 56.5 0 0 1 388.63 574.53" stroke="#cf0b05" stroke-width="13" fill="none"/><path d="M389.30 573.68 A56.5 56.5 0 0 1 386.68 576.81" stroke="#d40d06" stroke-width="13" fill="none"/><path d="M387.40 576.00 A56.5 56.5 0 0 1 384.62 578.99" stroke="#d90f07" stroke-width="13" fill="none"/><path d="M385.37 578.22 A56.5 56.5 0 0 1 383.23 580.32" stroke="#de1108" stroke-width="13" fill="none" stroke-linecap="round"/><ellipse cx="345.4" cy="537.7" rx="41.3" ry="39.5" fill="#d9d9d9"/><line x1="321.0" y1="565.2" x2="331.5" y2="555" stroke="#1b2a35" stroke-width="5"/></svg>
<span class="t" style="left:253.2px;top:602.5px;font-size:12px;color:#eef2f2">0,00</span>
<span class="t" style="left:226.89999999999998px;top:562.3px;font-size:12px;color:#eef2f2">1,00</span>
<span class="t" style="left:222.5px;top:515.7px;font-size:12px;color:#eef2f2">2,00</span>
<span class="t" style="left:242.0px;top:473px;font-size:12px;color:#eef2f2">3,00</span>
<span class="t" style="left:279.59999999999997px;top:442px;font-size:12px;color:#eef2f2">4,00</span>
<span class="t" style="left:327.9px;top:430.8px;font-size:12px;color:#eef2f2">5,00</span>
<span class="t" style="left:376.09999999999997px;top:442px;font-size:12px;color:#eef2f2">6,00</span>
<span class="t" style="left:414.2px;top:473px;font-size:12px;color:#eef2f2">7,00</span>
<span class="t" style="left:432.5px;top:515.7px;font-size:12px;color:#eef2f2">8,00</span>
<span class="t" style="left:429.2px;top:562.3px;font-size:12px;color:#eef2f2">9,00</span>
<span class="t" style="left:402.7px;top:603px;font-size:12px;color:#eef2f2">10,00</span>
<div class="a c" style="left:326px;width:40px;top:585.5px;font-size:14px;line-height:14px;color:#eef2f2">V</div>
<div class="a" style="left:288px;top:629px;width:117px;height:33px;background:#1e1e1e;border:1px solid #7a7a7a;border-radius:2px;box-sizing:border-box;"></div>
<svg class="a" style="left:294px;top:635px" width="18" height="21"><path d="M9 0 L18 8 H0 Z M0 13 H18 L9 21 Z" fill="#f4f4f4"/></svg>
<div class="a" style="left:310px;width:78px;text-align:right;top:633px;font-size:21px;line-height:24px;color:#f4f4f4">00,00</div>
<div class="a c" style="left:406px;width:30px;top:637px;font-size:16px;line-height:17px;color:#eef2f2">V</div>
<div class="a c" style="left:440px;width:50px;top:595px;font-size:15px;line-height:16px;color:#f4f4f4">Max</div>
<div class="a" style="left:435px;top:617px;width:59px;height:22px;background:#1e1e1e;border:1px solid #8a8a8a;box-sizing:border-box;"></div>
<div class="a c" style="left:435px;width:59px;top:619px;font-size:14px;line-height:18px;color:#f4f4f4">10,00</div>
<span class="t" style="left:331.14px;top:398.67px;font-size:17px;color:#f2f2f2;font-weight:400;transform:scaleX(1.0174);">V-Set</span>
<div class="a" style="left:508.3px;top:389.3px;width:296.7px;height:282.09999999999997px;background:#1a2a34;border:2.6px solid #80878c;box-sizing:border-box;border-radius:0 0 9px 9px;"></div>
<div class="a" style="left:510.90000000000003px;top:391.3px;width:291.5px;height:33.0px;background:#595959;"></div>
<div class="a" style="left:507.3px;top:388.3px;width:36px;height:33px;border-top:3.6px solid #f4f4f4;border-left:3.6px solid #f4f4f4;box-sizing:border-box;"></div>
<div class="a" style="left:770px;top:388.3px;width:36px;height:33px;border-top:3.6px solid #f4f4f4;border-right:3.6px solid #f4f4f4;box-sizing:border-box;"></div>
<div class="a" style="left:507.3px;top:650.4px;width:25px;height:22px;border-bottom:3.6px solid #f4f4f4;border-left:3.6px solid #f4f4f4;box-sizing:border-box;border-bottom-left-radius:10px;"></div>
<div class="a" style="left:781px;top:650.4px;width:25px;height:22px;border-bottom:3.6px solid #f4f4f4;border-right:3.6px solid #f4f4f4;box-sizing:border-box;border-bottom-right-radius:10px;"></div>
<svg class="a" style="left:0;top:0" width="1200" height="675"><line x1="599.50" y1="591.20" x2="588.68" y2="602.02" stroke="#eef2f2" stroke-width="1.6"/><line x1="594.99" y1="586.26" x2="586.52" y2="593.27" stroke="#eef2f2" stroke-width="1.4"/><line x1="590.98" y1="580.91" x2="581.88" y2="587.09" stroke="#eef2f2" stroke-width="1.4"/><line x1="587.48" y1="575.20" x2="577.84" y2="580.50" stroke="#eef2f2" stroke-width="1.4"/><line x1="584.54" y1="569.20" x2="574.44" y2="573.57" stroke="#eef2f2" stroke-width="1.4"/><line x1="582.17" y1="562.94" x2="567.62" y2="567.67" stroke="#eef2f2" stroke-width="1.6"/><line x1="580.41" y1="556.49" x2="569.67" y2="558.89" stroke="#eef2f2" stroke-width="1.4"/><line x1="579.26" y1="549.90" x2="568.35" y2="551.28" stroke="#eef2f2" stroke-width="1.4"/><line x1="578.74" y1="543.23" x2="567.74" y2="543.58" stroke="#eef2f2" stroke-width="1.4"/><line x1="578.84" y1="536.54" x2="567.86" y2="535.85" stroke="#eef2f2" stroke-width="1.4"/><line x1="579.57" y1="529.89" x2="564.46" y2="527.50" stroke="#eef2f2" stroke-width="1.6"/><line x1="580.93" y1="523.34" x2="570.28" y2="520.61" stroke="#eef2f2" stroke-width="1.4"/><line x1="582.90" y1="516.95" x2="572.55" y2="513.22" stroke="#eef2f2" stroke-width="1.4"/><line x1="585.46" y1="510.77" x2="575.50" y2="506.09" stroke="#eef2f2" stroke-width="1.4"/><line x1="588.59" y1="504.86" x2="579.12" y2="499.26" stroke="#eef2f2" stroke-width="1.4"/><line x1="592.26" y1="499.27" x2="579.88" y2="490.27" stroke="#eef2f2" stroke-width="1.6"/><line x1="596.44" y1="494.05" x2="588.19" y2="486.77" stroke="#eef2f2" stroke-width="1.4"/><line x1="601.10" y1="489.24" x2="593.57" y2="481.22" stroke="#eef2f2" stroke-width="1.4"/><line x1="606.18" y1="484.90" x2="599.44" y2="476.21" stroke="#eef2f2" stroke-width="1.4"/><line x1="611.66" y1="481.05" x2="605.76" y2="471.77" stroke="#eef2f2" stroke-width="1.4"/><line x1="617.47" y1="477.74" x2="610.52" y2="464.11" stroke="#eef2f2" stroke-width="1.6"/><line x1="623.56" y1="474.99" x2="619.51" y2="464.76" stroke="#eef2f2" stroke-width="1.4"/><line x1="629.89" y1="472.82" x2="626.82" y2="462.26" stroke="#eef2f2" stroke-width="1.4"/><line x1="636.40" y1="471.26" x2="634.33" y2="460.45" stroke="#eef2f2" stroke-width="1.4"/><line x1="643.02" y1="470.32" x2="641.98" y2="459.36" stroke="#eef2f2" stroke-width="1.4"/><line x1="649.70" y1="470.00" x2="649.70" y2="454.70" stroke="#eef2f2" stroke-width="1.6"/><line x1="656.38" y1="470.32" x2="657.42" y2="459.36" stroke="#eef2f2" stroke-width="1.4"/><line x1="663.00" y1="471.26" x2="665.07" y2="460.45" stroke="#eef2f2" stroke-width="1.4"/><line x1="669.51" y1="472.82" x2="672.58" y2="462.26" stroke="#eef2f2" stroke-width="1.4"/><line x1="675.84" y1="474.99" x2="679.89" y2="464.76" stroke="#eef2f2" stroke-width="1.4"/><line x1="681.93" y1="477.74" x2="688.88" y2="464.11" stroke="#eef2f2" stroke-width="1.6"/><line x1="687.74" y1="481.05" x2="693.64" y2="471.77" stroke="#eef2f2" stroke-width="1.4"/><line x1="693.22" y1="484.90" x2="699.96" y2="476.21" stroke="#eef2f2" stroke-width="1.4"/><line x1="698.30" y1="489.24" x2="705.83" y2="481.22" stroke="#eef2f2" stroke-width="1.4"/><line x1="702.96" y1="494.05" x2="711.21" y2="486.77" stroke="#eef2f2" stroke-width="1.4"/><line x1="707.14" y1="499.27" x2="719.52" y2="490.27" stroke="#eef2f2" stroke-width="1.6"/><line x1="710.81" y1="504.86" x2="720.28" y2="499.26" stroke="#eef2f2" stroke-width="1.4"/><line x1="713.94" y1="510.77" x2="723.90" y2="506.09" stroke="#eef2f2" stroke-width="1.4"/><line x1="716.50" y1="516.95" x2="726.85" y2="513.22" stroke="#eef2f2" stroke-width="1.4"/><line x1="718.47" y1="523.34" x2="729.12" y2="520.61" stroke="#eef2f2" stroke-width="1.4"/><line x1="719.83" y1="529.89" x2="734.94" y2="527.50" stroke="#eef2f2" stroke-width="1.6"/><line x1="720.56" y1="536.54" x2="731.54" y2="535.85" stroke="#eef2f2" stroke-width="1.4"/><line x1="720.66" y1="543.23" x2="731.66" y2="543.58" stroke="#eef2f2" stroke-width="1.4"/><line x1="720.14" y1="549.90" x2="731.05" y2="551.28" stroke="#eef2f2" stroke-width="1.4"/><line x1="718.99" y1="556.49" x2="729.73" y2="558.89" stroke="#eef2f2" stroke-width="1.4"/><line x1="717.23" y1="562.94" x2="731.78" y2="567.67" stroke="#eef2f2" stroke-width="1.6"/><line x1="714.86" y1="569.20" x2="724.96" y2="573.57" stroke="#eef2f2" stroke-width="1.4"/><line x1="711.92" y1="575.20" x2="721.56" y2="580.50" stroke="#eef2f2" stroke-width="1.4"/><line x1="708.42" y1="580.91" x2="717.52" y2="587.09" stroke="#eef2f2" stroke-width="1.4"/><line x1="704.41" y1="586.26" x2="712.88" y2="593.27" stroke="#eef2f2" stroke-width="1.4"/><line x1="699.90" y1="591.20" x2="710.72" y2="602.02" stroke="#eef2f2" stroke-width="1.6"/><path d="M611.97 580.32 A56.5 56.5 0 0 1 609.08 577.43" stroke="#7f9520" stroke-width="13" fill="none" stroke-linecap="round"/><path d="M609.83 578.22 A56.5 56.5 0 0 1 607.10 575.18" stroke="#729721" stroke-width="13" fill="none"/><path d="M607.80 576.00 A56.5 56.5 0 0 1 605.24 572.82" stroke="#659922" stroke-width="13" fill="none"/><path d="M605.90 573.68 A56.5 56.5 0 0 1 603.51 570.37" stroke="#589a22" stroke-width="13" fill="none"/><path d="M604.12 571.26 A56.5 56.5 0 0 1 601.91 567.83" stroke="#4d9a21" stroke-width="13" fill="none"/><path d="M602.47 568.75 A56.5 56.5 0 0 1 600.45 565.21" stroke="#419a21" stroke-width="13" fill="none"/><path d="M600.96 566.16 A56.5 56.5 0 0 1 599.13 562.51" stroke="#369a20" stroke-width="13" fill="none"/><path d="M599.58 563.49 A56.5 56.5 0 0 1 597.95 559.75" stroke="#2e9a20" stroke-width="13" fill="none"/><path d="M598.36 560.75 A56.5 56.5 0 0 1 596.92 556.93" stroke="#2e9a20" stroke-width="13" fill="none"/><path d="M597.27 557.95 A56.5 56.5 0 0 1 596.04 554.06" stroke="#2d9a20" stroke-width="13" fill="none"/><path d="M596.34 555.10 A56.5 56.5 0 0 1 595.32 551.15" stroke="#2d9a20" stroke-width="13" fill="none"/><path d="M595.56 552.20 A56.5 56.5 0 0 1 594.75 548.20" stroke="#2d9a20" stroke-width="13" fill="none"/><path d="M594.94 549.26 A56.5 56.5 0 0 1 594.34 545.23" stroke="#2c9a20" stroke-width="13" fill="none"/><path d="M594.47 546.30 A56.5 56.5 0 0 1 594.09 542.23" stroke="#2c9a20" stroke-width="13" fill="none"/><path d="M594.16 543.31 A56.5 56.5 0 0 1 594.00 539.23" stroke="#2c9a20" stroke-width="13" fill="none"/><path d="M594.02 540.31 A56.5 56.5 0 0 1 594.07 536.23" stroke="#2c9a20" stroke-width="13" fill="none"/><path d="M594.03 537.31 A56.5 56.5 0 0 1 594.29 533.24" stroke="#2d9a20" stroke-width="13" fill="none"/><path d="M594.19 534.32 A56.5 56.5 0 0 1 594.68 530.26" stroke="#2d9921" stroke-width="13" fill="none"/><path d="M594.52 531.33 A56.5 56.5 0 0 1 595.22 527.31" stroke="#2d9921" stroke-width="13" fill="none"/><path d="M595.01 528.37 A56.5 56.5 0 0 1 595.92 524.39" stroke="#2d9921" stroke-width="13" fill="none"/><path d="M595.65 525.44 A56.5 56.5 0 0 1 596.77 521.51" stroke="#2e9921" stroke-width="13" fill="none"/><path d="M596.45 522.54 A56.5 56.5 0 0 1 597.78 518.68" stroke="#2e9921" stroke-width="13" fill="none"/><path d="M597.40 519.70 A56.5 56.5 0 0 1 598.93 515.91" stroke="#2e9921" stroke-width="13" fill="none"/><path d="M598.50 516.90 A56.5 56.5 0 0 1 600.23 513.21" stroke="#2e9921" stroke-width="13" fill="none"/><path d="M599.75 514.17 A56.5 56.5 0 0 1 601.67 510.57" stroke="#2e9822" stroke-width="13" fill="none"/><path d="M601.14 511.51 A56.5 56.5 0 0 1 603.25 508.02" stroke="#2f9822" stroke-width="13" fill="none"/><path d="M602.67 508.93 A56.5 56.5 0 0 1 604.96 505.55" stroke="#2f9822" stroke-width="13" fill="none"/><path d="M604.33 506.43 A56.5 56.5 0 0 1 606.80 503.18" stroke="#339722" stroke-width="13" fill="none"/><path d="M606.13 504.03 A56.5 56.5 0 0 1 608.77 500.91" stroke="#3b9621" stroke-width="13" fill="none"/><path d="M608.05 501.72 A56.5 56.5 0 0 1 610.85 498.75" stroke="#439421" stroke-width="13" fill="none"/><path d="M610.09 499.52 A56.5 56.5 0 0 1 613.04 496.70" stroke="#4b9321" stroke-width="13" fill="none"/><path d="M612.24 497.43 A56.5 56.5 0 0 1 615.34 494.77" stroke="#539120" stroke-width="13" fill="none"/><path d="M614.50 495.45 A56.5 56.5 0 0 1 617.74 492.97" stroke="#5b9020" stroke-width="13" fill="none"/><path d="M616.87 493.60 A56.5 56.5 0 0 1 620.23 491.29" stroke="#678b1e" stroke-width="13" fill="none"/><path d="M619.32 491.88 A56.5 56.5 0 0 1 622.81 489.75" stroke="#73871d" stroke-width="13" fill="none"/><path d="M621.87 490.29 A56.5 56.5 0 0 1 625.46 488.35" stroke="#7f821b" stroke-width="13" fill="none"/><path d="M624.50 488.84 A56.5 56.5 0 0 1 628.19 487.09" stroke="#8b7e1a" stroke-width="13" fill="none"/><path d="M627.20 487.53 A56.5 56.5 0 0 1 630.98 485.98" stroke="#967918" stroke-width="13" fill="none"/><path d="M629.97 486.36 A56.5 56.5 0 0 1 633.82 485.02" stroke="#a37416" stroke-width="13" fill="none"/><path d="M632.79 485.35 A56.5 56.5 0 0 1 636.71 484.21" stroke="#b06f13" stroke-width="13" fill="none"/><path d="M635.67 484.48 A56.5 56.5 0 0 1 639.64 483.55" stroke="#bd6910" stroke-width="13" fill="none"/><path d="M638.58 483.77 A56.5 56.5 0 0 1 642.60 483.05" stroke="#ca630d" stroke-width="13" fill="none"/><path d="M641.53 483.22 A56.5 56.5 0 0 1 645.58 482.71" stroke="#d75e0a" stroke-width="13" fill="none"/><path d="M644.51 482.82 A56.5 56.5 0 0 1 648.58 482.53" stroke="#e25807" stroke-width="13" fill="none"/><path d="M647.50 482.58 A56.5 56.5 0 0 1 651.58 482.51" stroke="#e95306" stroke-width="13" fill="none"/><path d="M650.50 482.50 A56.5 56.5 0 0 1 654.58 482.65" stroke="#f04e04" stroke-width="13" fill="none"/><path d="M653.50 482.58 A56.5 56.5 0 0 1 657.57 482.94" stroke="#f74802" stroke-width="13" fill="none"/><path d="M656.49 482.82 A56.5 56.5 0 0 1 660.53 483.40" stroke="#fe4300" stroke-width="13" fill="none"/><path d="M659.47 483.22 A56.5 56.5 0 0 1 663.47 484.01" stroke="#fc3f00" stroke-width="13" fill="none"/><path d="M662.42 483.77 A56.5 56.5 0 0 1 666.37 484.78" stroke="#f83b00" stroke-width="13" fill="none"/><path d="M665.33 484.48 A56.5 56.5 0 0 1 669.23 485.70" stroke="#f53600" stroke-width="13" fill="none"/><path d="M668.21 485.35 A56.5 56.5 0 0 1 672.04 486.77" stroke="#f13200" stroke-width="13" fill="none"/><path d="M671.03 486.36 A56.5 56.5 0 0 1 674.78 487.98" stroke="#ed2e00" stroke-width="13" fill="none"/><path d="M673.80 487.53 A56.5 56.5 0 0 1 677.46 489.34" stroke="#ea2a00" stroke-width="13" fill="none"/><path d="M676.50 488.84 A56.5 56.5 0 0 1 680.06 490.85" stroke="#e62600" stroke-width="13" fill="none"/><path d="M679.13 490.29 A56.5 56.5 0 0 1 682.57 492.48" stroke="#e32300" stroke-width="13" fill="none"/><path d="M681.68 491.88 A56.5 56.5 0 0 1 685.00 494.25" stroke="#df2000" stroke-width="13" fill="none"/><path d="M684.13 493.60 A56.5 56.5 0 0 1 687.32 496.15" stroke="#dc1c00" stroke-width="13" fill="none"/><path d="M686.50 495.45 A56.5 56.5 0 0 1 689.55 498.16" stroke="#d81900" stroke-width="13" fill="none"/><path d="M688.76 497.43 A56.5 56.5 0 0 1 691.66 500.30" stroke="#d41600" stroke-width="13" fill="none"/><path d="M690.91 499.52 A56.5 56.5 0 0 1 693.66 502.54" stroke="#d11200" stroke-width="13" fill="none"/><path d="M692.95 501.72 A56.5 56.5 0 0 1 695.53 504.88" stroke="#cd0f00" stroke-width="13" fill="none"/><path d="M694.87 504.03 A56.5 56.5 0 0 1 697.28 507.32" stroke="#ca0c00" stroke-width="13" fill="none"/><path d="M696.67 506.43 A56.5 56.5 0 0 1 698.90 509.85" stroke="#c60900" stroke-width="13" fill="none"/><path d="M698.33 508.93 A56.5 56.5 0 0 1 700.38 512.46" stroke="#c30800" stroke-width="13" fill="none"/><path d="M699.86 511.51 A56.5 56.5 0 0 1 701.72 515.15" stroke="#c00700" stroke-width="13" fill="none"/><path d="M701.25 514.17 A56.5 56.5 0 0 1 702.91 517.90" stroke="#bc0600" stroke-width="13" fill="none"/><path d="M702.50 516.90 A56.5 56.5 0 0 1 703.96 520.72" stroke="#b90500" stroke-width="13" fill="none"/><path d="M703.60 519.70 A56.5 56.5 0 0 1 704.86 523.58" stroke="#b60400" stroke-width="13" fill="none"/><path d="M704.55 522.54 A56.5 56.5 0 0 1 705.60 526.49" stroke="#b20300" stroke-width="13" fill="none"/><path d="M705.35 525.44 A56.5 56.5 0 0 1 706.18 529.43" stroke="#af0200" stroke-width="13" fill="none"/><path d="M705.99 528.37 A56.5 56.5 0 0 1 706.61 532.40" stroke="#ac0100" stroke-width="13" fill="none"/><path d="M706.48 531.33 A56.5 56.5 0 0 1 706.88 535.39" stroke="#ab0000" stroke-width="13" fill="none"/><path d="M706.81 534.32 A56.5 56.5 0 0 1 707.00 538.39" stroke="#ac0000" stroke-width="13" fill="none"/><path d="M706.97 537.31 A56.5 56.5 0 0 1 706.95 541.39" stroke="#ad0000" stroke-width="13" fill="none"/><path d="M706.98 540.31 A56.5 56.5 0 0 1 706.74 544.39" stroke="#ae0000" stroke-width="13" fill="none"/><path d="M706.84 543.31 A56.5 56.5 0 0 1 706.38 547.37" stroke="#af0000" stroke-width="13" fill="none"/><path d="M706.53 546.30 A56.5 56.5 0 0 1 705.85 550.32" stroke="#b00000" stroke-width="13" fill="none"/><path d="M706.06 549.26 A56.5 56.5 0 0 1 705.17 553.25" stroke="#b10000" stroke-width="13" fill="none"/><path d="M705.44 552.20 A56.5 56.5 0 0 1 704.34 556.13" stroke="#b20000" stroke-width="13" fill="none"/><path d="M704.66 555.10 A56.5 56.5 0 0 1 703.35 558.97" stroke="#b30000" stroke-width="13" fill="none"/><path d="M703.73 557.95 A56.5 56.5 0 0 1 702.22 561.75" stroke="#b60100" stroke-width="13" fill="none"/><path d="M702.64 560.75 A56.5 56.5 0 0 1 700.94 564.46" stroke="#bb0301" stroke-width="13" fill="none"/><path d="M701.42 563.49 A56.5 56.5 0 0 1 699.51 567.10" stroke="#c00502" stroke-width="13" fill="none"/><path d="M700.04 566.16 A56.5 56.5 0 0 1 697.95 569.67" stroke="#c50703" stroke-width="13" fill="none"/><path d="M698.53 568.75 A56.5 56.5 0 0 1 696.26 572.14" stroke="#ca0904" stroke-width="13" fill="none"/><path d="M696.88 571.26 A56.5 56.5 0 0 1 694.43 574.53" stroke="#cf0b05" stroke-width="13" fill="none"/><path d="M695.10 573.68 A56.5 56.5 0 0 1 692.48 576.81" stroke="#d40d06" stroke-width="13" fill="none"/><path d="M693.20 576.00 A56.5 56.5 0 0 1 690.42 578.99" stroke="#d90f07" stroke-width="13" fill="none"/><path d="M691.17 578.22 A56.5 56.5 0 0 1 689.03 580.32" stroke="#de1108" stroke-width="13" fill="none" stroke-linecap="round"/><ellipse cx="651.2" cy="537.7" rx="41.3" ry="39.5" fill="#d9d9d9"/><line x1="626.8000000000001" y1="565.2" x2="637.3000000000001" y2="555" stroke="#1b2a35" stroke-width="5"/></svg>
<span class="t" style="left:557.7px;top:602.2px;font-size:12px;color:#eef2f2">0,000</span>
<span class="t" style="left:532.5px;top:562.1px;font-size:12px;color:#eef2f2">0,500</span>
<span class="t" style="left:528.7px;top:516.2px;font-size:12px;color:#eef2f2">1,000</span>
<span class="t" style="left:548.2px;top:472.7px;font-size:12px;color:#eef2f2">1,500</span>
<span class="t" style="left:584.4000000000001px;top:442.1px;font-size:12px;color:#eef2f2">2,000</span>
<span class="t" style="left:633.2px;top:431.2px;font-size:12px;color:#eef2f2">2,500</span>
<span class="t" style="left:682.0px;top:442.7px;font-size:12px;color:#eef2f2">3,000</span>
<span class="t" style="left:720.1px;top:472.6px;font-size:12px;color:#eef2f2">3,500</span>
<span class="t" style="left:739.0px;top:515.6px;font-size:12px;color:#eef2f2">4,000</span>
<span class="t" style="left:735.7px;top:562.2px;font-size:12px;color:#eef2f2">4,500</span>
<span class="t" style="left:709.7px;top:602.3px;font-size:12px;color:#eef2f2">5,000</span>
<div class="a" style="left:593.8px;top:629px;width:117px;height:33px;background:#1e1e1e;border:1px solid #7a7a7a;border-radius:2px;box-sizing:border-box;"></div>
<svg class="a" style="left:599.8px;top:635px" width="18" height="21"><path d="M9 0 L18 8 H0 Z M0 13 H18 L9 21 Z" fill="#f4f4f4"/></svg>
<div class="a" style="left:615.8px;width:78px;text-align:right;top:633px;font-size:21px;line-height:24px;color:#f4f4f4">0,000</div>
<div class="a c" style="left:711.8px;width:30px;top:637px;font-size:16px;line-height:17px;color:#eef2f2">A</div>
<div class="a c" style="left:745.8px;width:50px;top:595px;font-size:15px;line-height:16px;color:#f4f4f4">Max</div>
<div class="a" style="left:740.8px;top:617px;width:59px;height:22px;background:#1e1e1e;border:1px solid #8a8a8a;box-sizing:border-box;"></div>
<div class="a c" style="left:740.8px;width:59px;top:619px;font-size:14px;line-height:18px;color:#f4f4f4">5,000</div>
<span class="t" style="left:635.98px;top:398.67px;font-size:17px;color:#f2f2f2;font-weight:400;transform:scaleX(1.1953);">I-Set</span>
<div class="a" style="left:813.2px;top:389.3px;width:183.19999999999993px;height:135.7px;background:#1a2a34;border:2.6px solid #80878c;box-sizing:border-box;border-radius:0 0 9px 9px;"></div>
<div class="a" style="left:815.8000000000001px;top:391.3px;width:177.99999999999994px;height:33.69999999999999px;background:#595959;"></div>
<div class="a" style="left:812.2px;top:388.3px;width:36px;height:33px;border-top:3.6px solid #f4f4f4;border-left:3.6px solid #f4f4f4;box-sizing:border-box;"></div>
<div class="a" style="left:961.4px;top:388.3px;width:36px;height:33px;border-top:3.6px solid #f4f4f4;border-right:3.6px solid #f4f4f4;box-sizing:border-box;"></div>
<div class="a" style="left:812.2px;top:504px;width:25px;height:22px;border-bottom:3.6px solid #f4f4f4;border-left:3.6px solid #f4f4f4;box-sizing:border-box;border-bottom-left-radius:10px;"></div>
<div class="a" style="left:972.4px;top:504px;width:25px;height:22px;border-bottom:3.6px solid #f4f4f4;border-right:3.6px solid #f4f4f4;box-sizing:border-box;border-bottom-right-radius:10px;"></div>
<span class="t" style="left:827.18px;top:400.16px;font-size:16px;color:#f2f2f2;font-weight:400;transform:scaleX(1.0238);">Time Synchronization</span>
<div class="a" style="left:882px;top:435px;width:47px;height:23px;border:3px solid #dfe6df;box-sizing:border-box;background:#0b5c0b;"></div>
<div class="a" style="left:887px;top:440px;width:7px;height:2px;background:#b8f080;"></div>
<div class="a" style="left:842px;top:472px;width:130px;height:34px;background:#808080;border:1.5px solid #c4c4c4;border-radius:7px;box-sizing:border-box;"></div>
<span class="t" style="left:866.25px;top:482.85px;font-size:15px;color:#f2f2f2;font-weight:400;transform:scaleX(0.9939);">Synchronize</span>
<div class="a" style="left:813.8px;top:534.9px;width:182.4000000000001px;height:135.5px;background:#1a2a34;border:2.6px solid #80878c;box-sizing:border-box;border-radius:0 0 9px 9px;"></div>
<div class="a" style="left:816.4px;top:536.9px;width:177.2000000000001px;height:31.399999999999977px;background:#595959;"></div>
<div class="a" style="left:812.8px;top:533.9px;width:36px;height:33px;border-top:3.6px solid #f4f4f4;border-left:3.6px solid #f4f4f4;box-sizing:border-box;"></div>
<div class="a" style="left:961.2px;top:533.9px;width:36px;height:33px;border-top:3.6px solid #f4f4f4;border-right:3.6px solid #f4f4f4;box-sizing:border-box;"></div>
<div class="a" style="left:812.8px;top:649.4px;width:25px;height:22px;border-bottom:3.6px solid #f4f4f4;border-left:3.6px solid #f4f4f4;box-sizing:border-box;border-bottom-left-radius:10px;"></div>
<div class="a" style="left:972.2px;top:649.4px;width:25px;height:22px;border-bottom:3.6px solid #f4f4f4;border-right:3.6px solid #f4f4f4;box-sizing:border-box;border-bottom-right-radius:10px;"></div>
<span class="t" style="left:846.16px;top:544.16px;font-size:16px;color:#f2f2f2;font-weight:400;transform:scaleX(1.0503);">Backlight Adjust</span>
<div class="a" style="left:830px;top:586px;width:153px;height:17px;background:#1a2630;border:1px solid #6a7880;box-sizing:border-box;"></div>
<div class="a" style="left:829px;top:588px;width:19px;height:14px;background:#d4d4d4;border-radius:5px;"></div>
<div class="a" style="left:839.2px;top:614px;width:2.6px;height:12px;background:#f0f0f0;"></div>
<div class="a c" style="left:828.3px;width:20px;top:638px;font-size:15px;line-height:16px;color:#f0f0f0">0</div>
<div class="a" style="left:865.7px;top:614px;width:2.6px;height:12px;background:#f0f0f0;"></div>
<div class="a c" style="left:858px;width:20px;top:638px;font-size:15px;line-height:16px;color:#f0f0f0">1</div>
<div class="a" style="left:891.7px;top:614px;width:2.6px;height:12px;background:#f0f0f0;"></div>
<div class="a c" style="left:883px;width:20px;top:638px;font-size:15px;line-height:16px;color:#f0f0f0">2</div>
<div class="a" style="left:917.2px;top:614px;width:2.6px;height:12px;background:#f0f0f0;"></div>
<div class="a c" style="left:908.2px;width:20px;top:638px;font-size:15px;line-height:16px;color:#f0f0f0">3</div>
<div class="a" style="left:943.7px;top:614px;width:2.6px;height:12px;background:#f0f0f0;"></div>
<div class="a c" style="left:933.2px;width:20px;top:638px;font-size:15px;line-height:16px;color:#f0f0f0">4</div>
<div class="a" style="left:970.1px;top:614px;width:2.6px;height:12px;background:#f0f0f0;"></div>
<div class="a c" style="left:962.6px;width:20px;top:638px;font-size:15px;line-height:16px;color:#f0f0f0">5</div>
</body></html>
